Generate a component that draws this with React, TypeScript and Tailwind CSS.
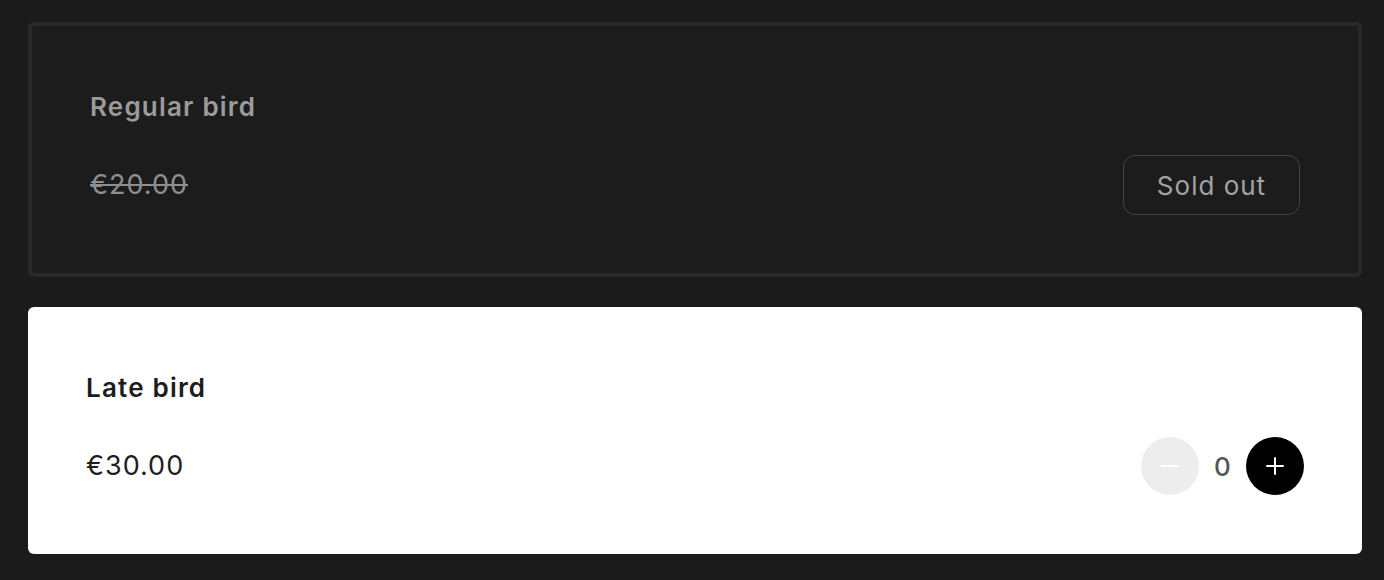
import React, { useState } from 'react';

const font = { fontFamily: 'Inter, "Noto Sans", sans-serif' };

const App: React.FC = () => {
  const [qty, setQty] = useState(0);

  return (
    <div className="min-h-[580px] bg-[#1b1b1b] pl-[28px] pr-[22px] pt-[22px]" style={font}>
      <div className="flex flex-col gap-[30px]">
        {/* Sold out ticket */}
        <div className="rounded-[6px] border-4 border-[#292929] bg-[#1c1c1c] px-[58px] pt-[58px] pb-[59px]">
          <div className="flex h-[44px] items-center">
            <h3 className="text-[26px] font-semibold tracking-[1.2px] text-[#9b9b9b]">Regular bird</h3>
          </div>
          <div className="mt-[28px] flex h-[58px] items-center justify-between">
            <span className="text-[27px] tracking-[1px] text-[#8f8f8f] line-through decoration-[2px]">€20.00</span>
            <button className="flex h-[60px] w-[177px] items-center justify-center rounded-[12px] border border-[#444] text-[26px] tracking-[1px] text-[#a3a3a3]">
              Sold out
            </button>
          </div>
        </div>

        {/* Available ticket */}
        <div className="rounded-[6px] bg-white px-[58px] pt-[58px] pb-[59px]">
          <div className="flex h-[44px] items-center">
            <h3 className="text-[26px] font-semibold tracking-[1.2px] text-[#1c1c1c]">Late bird</h3>
          </div>
          <div className="mt-[28px] flex h-[58px] items-center justify-between">
            <span className="text-[27px] tracking-[1px] text-[#1e1e1e]">€30.00</span>
            <div className="flex items-center">
              <button
                onClick={() => setQty(Math.max(0, qty - 1))}
                className="flex h-[58px] w-[58px] items-center justify-center rounded-full bg-[#ededee]"
              >
                <svg width="18" height="18" viewBox="0 0 18 18">
                  <path d="M1 9h16" stroke="white" strokeWidth="2" strokeLinecap="round" />
                </svg>
              </button>
              <span className="w-[47px] text-center text-[26px] font-medium text-[#555]">{qty}</span>
              <button
                onClick={() => setQty(qty + 1)}
                className="flex h-[58px] w-[58px] items-center justify-center rounded-full bg-black"
              >
                <svg width="18" height="18" viewBox="0 0 18 18">
                  <path d="M1 9h16M9 1v16" stroke="white" strokeWidth="2" strokeLinecap="round" />
                </svg>
              </button>
            </div>
          </div>
        </div>
      </div>
    </div>
  );
};

export default App;
